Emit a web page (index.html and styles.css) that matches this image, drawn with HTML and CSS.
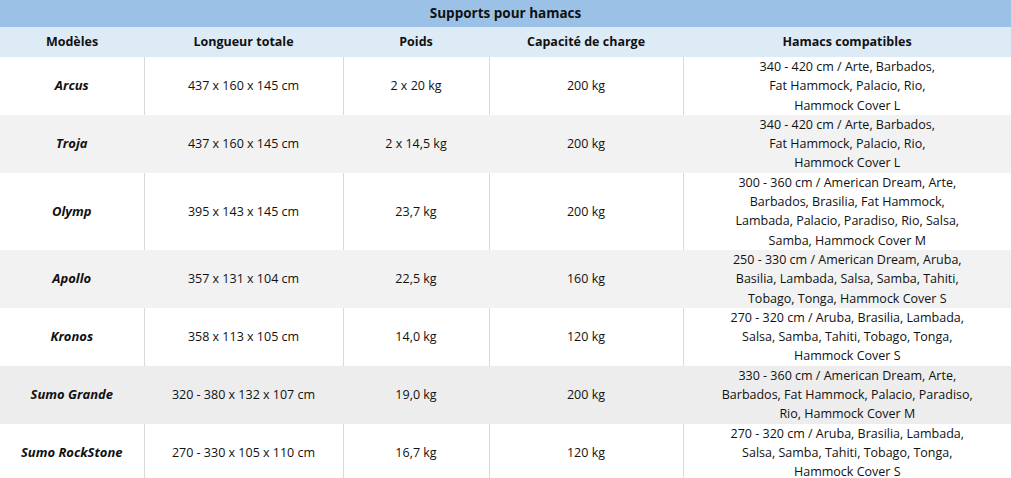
FILE: index.html
```html
<!DOCTYPE html>
<html lang="fr">
<head>
<meta charset="utf-8">
<title>Supports pour hamacs</title>
<link rel="stylesheet" href="styles.css">
</head>
<body>
<table class="tbl">
  <colgroup>
    <col class="c1"><col class="c2"><col class="c3"><col class="c4"><col class="c5">
  </colgroup>
  <thead>
    <tr class="title"><th colspan="5">Supports pour hamacs</th></tr>
    <tr class="head">
      <th>Modèles</th><th>Longueur totale</th><th>Poids</th><th>Capacité de charge</th><th>Hamacs compatibles</th>
    </tr>
  </thead>
  <tbody>
    <tr class="row">
      <td class="model">Arcus</td><td>437 x 160 x 145 cm</td><td>2 x 20 kg</td><td>200 kg</td>
      <td>340 - 420 cm / Arte, Barbados,<br>Fat Hammock, Palacio, Rio,<br>Hammock Cover L</td>
    </tr>
    <tr class="row alt">
      <td class="model">Troja</td><td>437 x 160 x 145 cm</td><td>2 x 14,5 kg</td><td>200 kg</td>
      <td>340 - 420 cm / Arte, Barbados,<br>Fat Hammock, Palacio, Rio,<br>Hammock Cover L</td>
    </tr>
    <tr class="row">
      <td class="model">Olymp</td><td>395 x 143 x 145 cm</td><td>23,7 kg</td><td>200 kg</td>
      <td>300 - 360 cm / American Dream, Arte,<br>Barbados, Brasilia, Fat Hammock,<br>Lambada, Palacio, Paradiso, Rio, Salsa,<br>Samba, Hammock Cover M</td>
    </tr>
    <tr class="row alt">
      <td class="model">Apollo</td><td>357 x 131 x 104 cm</td><td>22,5 kg</td><td>160 kg</td>
      <td>250 - 330 cm / American Dream, Aruba,<br>Basilia, Lambada, Salsa, Samba, Tahiti,<br>Tobago, Tonga, Hammock Cover S</td>
    </tr>
    <tr class="row">
      <td class="model">Kronos</td><td>358 x 113 x 105 cm</td><td>14,0 kg</td><td>120 kg</td>
      <td>270 - 320 cm / Aruba, Brasilia, Lambada,<br>Salsa, Samba, Tahiti, Tobago, Tonga,<br>Hammock Cover S</td>
    </tr>
    <tr class="row alt2">
      <td class="model">Sumo Grande</td><td>320 - 380 x 132 x 107 cm</td><td>19,0 kg</td><td>200 kg</td>
      <td>330 - 360 cm / American Dream, Arte,<br>Barbados, Fat Hammock, Palacio, Paradiso,<br>Rio, Hammock Cover M</td>
    </tr>
    <tr class="row">
      <td class="model">Sumo RockStone</td><td>270 - 330 x 105 x 110 cm</td><td>16,7 kg</td><td>120 kg</td>
      <td>270 - 320 cm / Aruba, Brasilia, Lambada,<br>Salsa, Samba, Tahiti, Tobago, Tonga,<br>Hammock Cover S</td>
    </tr>
  </tbody>
</table>
</body>
</html>
```
FILE: styles.css
```css
html, body {
  margin: 0;
  padding: 0;
  background: #ffffff;
}
body {
  font-family: "Open Sans", "Liberation Sans", sans-serif;
  font-size: 12.5px;
  color: #111;
  overflow: hidden;
}
.tbl {
  width: 1011px;
  table-layout: fixed;
  border-collapse: collapse;
}
.c1 { width: 144px; }
.c2 { width: 199px; }
.c3 { width: 146px; }
.c4 { width: 194px; }
.c5 { width: 328px; }
.tbl th, .tbl td {
  padding: 0;
  text-align: center;
  vertical-align: middle;
  line-height: 19.3px;
}
.title th {
  background: #9bc2e6;
  height: 27px;
  font-size: 13.5px;
  font-weight: 700;
}
.head th {
  background: #ddebf7;
  height: 30px;
  font-weight: 700;
}
.row td {
  background: #ffffff;
  border-left: 1px solid #d9d9d9;
}
.row td:first-child { border-left: none; }
.row.alt td {
  background: #f2f2f2;
  border-left-color: #f2f2f2;
}
.row.alt2 td {
  background: #ededed;
  border-left-color: #ededed;
}
.model {
  font-size: 13px;
  font-weight: 700;
  font-style: italic;
}
```
